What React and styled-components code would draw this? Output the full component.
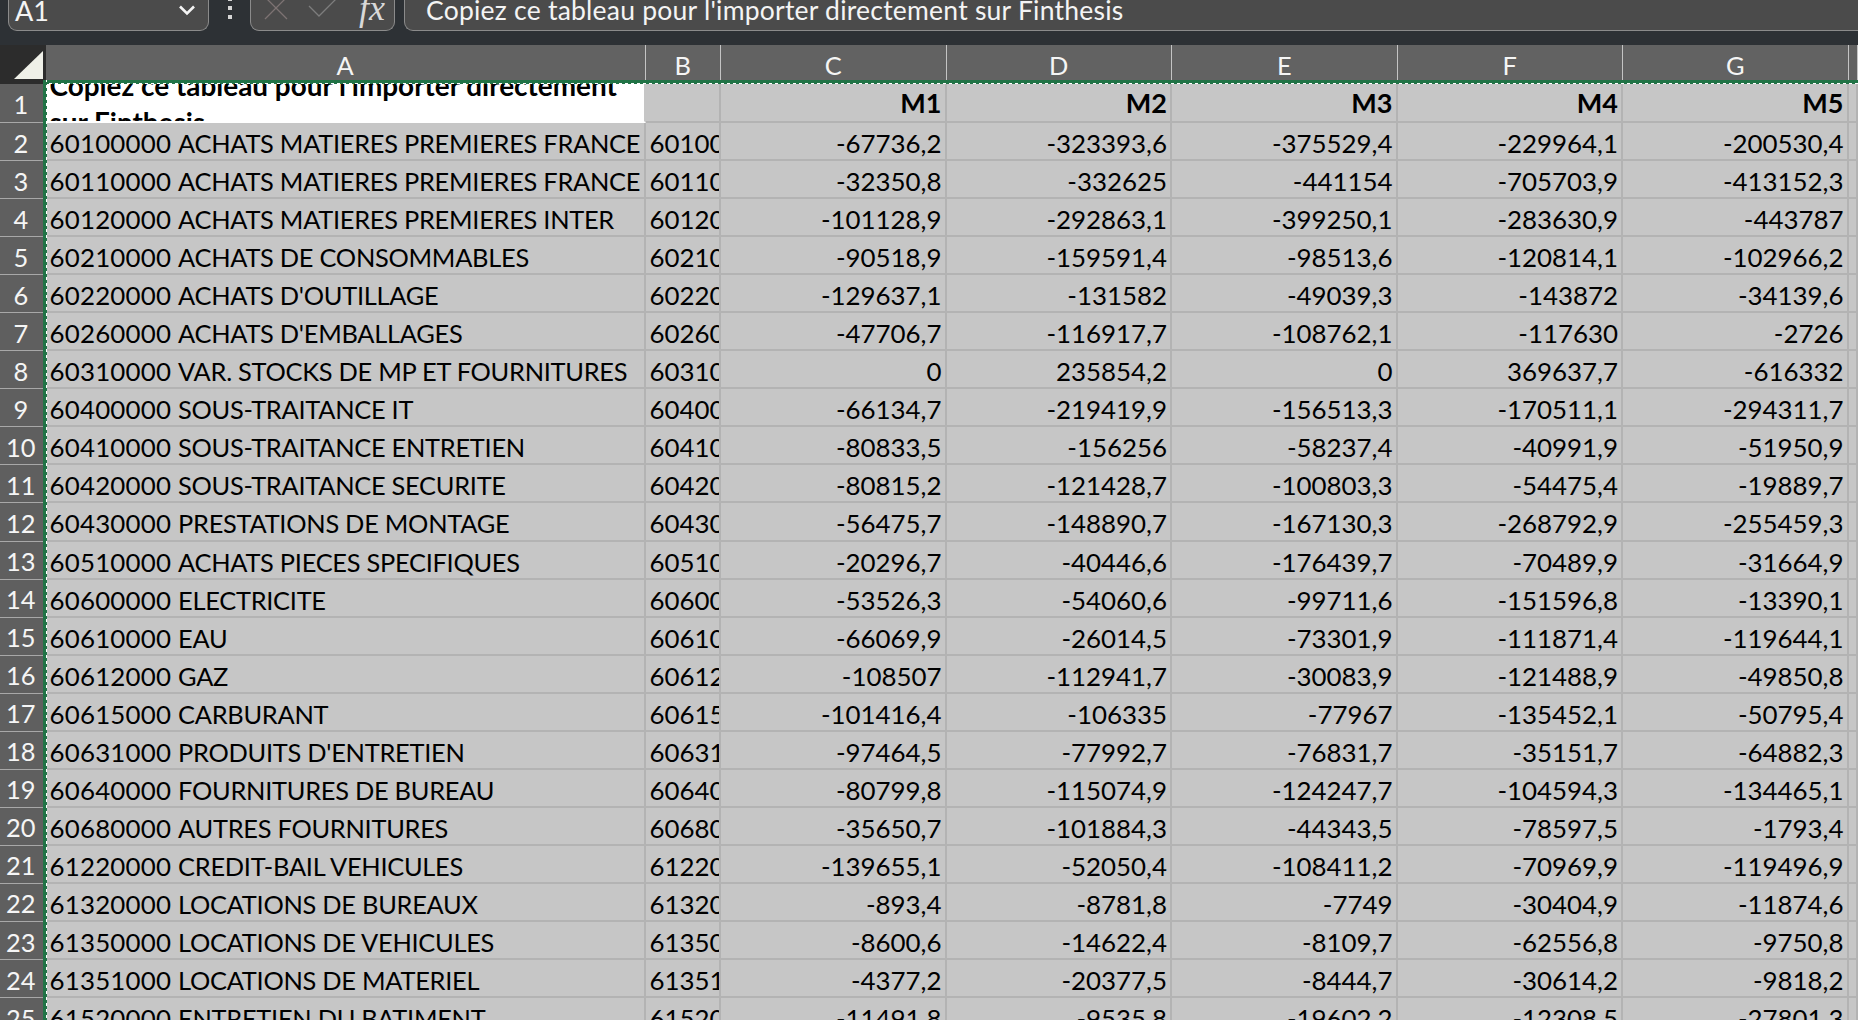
import React from "react";
import styled, { createGlobalStyle } from "styled-components";

const rows = [
    ["60100000 ACHATS MATIERES PREMIERES FRANCE", "60100", "-67736,2", "-323393,6", "-375529,4", "-229964,1", "-200530,4"],
    ["60110000 ACHATS MATIERES PREMIERES FRANCE", "60110", "-32350,8", "-332625", "-441154", "-705703,9", "-413152,3"],
    ["60120000 ACHATS MATIERES PREMIERES INTER", "60120", "-101128,9", "-292863,1", "-399250,1", "-283630,9", "-443787"],
    ["60210000 ACHATS DE CONSOMMABLES", "60210", "-90518,9", "-159591,4", "-98513,6", "-120814,1", "-102966,2"],
    ["60220000 ACHATS D'OUTILLAGE", "60220", "-129637,1", "-131582", "-49039,3", "-143872", "-34139,6"],
    ["60260000 ACHATS D'EMBALLAGES", "60260", "-47706,7", "-116917,7", "-108762,1", "-117630", "-2726"],
    ["60310000 VAR. STOCKS DE MP ET FOURNITURES", "60310", "0", "235854,2", "0", "369637,7", "-616332"],
    ["60400000 SOUS-TRAITANCE IT", "60400", "-66134,7", "-219419,9", "-156513,3", "-170511,1", "-294311,7"],
    ["60410000 SOUS-TRAITANCE ENTRETIEN", "60410", "-80833,5", "-156256", "-58237,4", "-40991,9", "-51950,9"],
    ["60420000 SOUS-TRAITANCE SECURITE", "60420", "-80815,2", "-121428,7", "-100803,3", "-54475,4", "-19889,7"],
    ["60430000 PRESTATIONS DE MONTAGE", "60430", "-56475,7", "-148890,7", "-167130,3", "-268792,9", "-255459,3"],
    ["60510000 ACHATS PIECES SPECIFIQUES", "60510", "-20296,7", "-40446,6", "-176439,7", "-70489,9", "-31664,9"],
    ["60600000 ELECTRICITE", "60600", "-53526,3", "-54060,6", "-99711,6", "-151596,8", "-13390,1"],
    ["60610000 EAU", "60610", "-66069,9", "-26014,5", "-73301,9", "-111871,4", "-119644,1"],
    ["60612000 GAZ", "60612", "-108507", "-112941,7", "-30083,9", "-121488,9", "-49850,8"],
    ["60615000 CARBURANT", "60615", "-101416,4", "-106335", "-77967", "-135452,1", "-50795,4"],
    ["60631000 PRODUITS D'ENTRETIEN", "60631", "-97464,5", "-77992,7", "-76831,7", "-35151,7", "-64882,3"],
    ["60640000 FOURNITURES DE BUREAU", "60640", "-80799,8", "-115074,9", "-124247,7", "-104594,3", "-134465,1"],
    ["60680000 AUTRES FOURNITURES", "60680", "-35650,7", "-101884,3", "-44343,5", "-78597,5", "-1793,4"],
    ["61220000 CREDIT-BAIL VEHICULES", "61220", "-139655,1", "-52050,4", "-108411,2", "-70969,9", "-119496,9"],
    ["61320000 LOCATIONS DE BUREAUX", "61320", "-893,4", "-8781,8", "-7749", "-30404,9", "-11874,6"],
    ["61350000 LOCATIONS DE VEHICULES", "61350", "-8600,6", "-14622,4", "-8109,7", "-62556,8", "-9750,8"],
    ["61351000 LOCATIONS DE MATERIEL", "61351", "-4377,2", "-20377,5", "-8444,7", "-30614,2", "-9818,2"],
    ["61520000 ENTRETIEN DU BATIMENT", "61520", "-11491,8", "-9535,8", "-19602,2", "-12308,5", "-27801,3"],
];

const GRID_COLUMNS = "45.5px 600px 75.5px 225.5px 225.5px 225.5px 225.5px 225.5px 1fr";

const GlobalStyle = createGlobalStyle`
    html, body {
        margin: 0;
        height: 100%;
        background: #2d3135;
        overflow: hidden;
    }
`;

const Page = styled.div`
    width: 1858px;
    height: 1020px;
    overflow: hidden;
    background: #2d3135;
    font-family: "Lato", "Liberation Sans", sans-serif;
    font-size: 25.4px;
    color: #000;
`;

const FormulaRow = styled.div`
    height: 31px;
    display: flex;
    padding-left: 8px;
    margin-bottom: 14px;
`;

const BarBox = styled.div`
    box-sizing: border-box;
    height: 31px;
    display: flex;
    align-items: center;
    background: #4b4b4b;
    border: 1px solid #8b8b8b;
    border-top: none;
    border-radius: 0 0 9px 9px;
    color: #f4f4f4;
    overflow: hidden;
`;

const NameBox = styled(BarBox)`
    width: 201px;
    padding: 0 12px 10px 6px;
    justify-content: space-between;
    font-size: 27px;
`;

const FxBox = styled(BarBox)`
    width: 145px;
    padding: 0 9px 0 13px;
    justify-content: space-between;
    align-items: flex-end;
`;

const FormulaBox = styled(BarBox)`
    flex: 1;
    margin-left: 9px;
    padding: 0 0 10px 21px;
    border-radius: 0 0 0 9px;
    border-right: none;
    white-space: nowrap;
    font-size: 26.5px;
    letter-spacing: 0.23px;
`;

const Dots = styled.div`
    width: 41px;
    display: flex;
    flex-direction: column;
    align-items: center;
    gap: 5px;
    margin-top: -3px;

    i {
        width: 4px;
        height: 4px;
        background: #d6d6d6;
    }
`;

const CancelSlot = styled.span`
    display: flex;
    margin-bottom: 10px;
`;

const EnterSlot = styled.span`
    display: flex;
    margin: 0 auto 12px 20px;
`;

const FxLabel = styled.span`
    font-family: "Liberation Serif", serif;
    font-style: italic;
    font-size: 36px;
    line-height: 36px;
    margin-bottom: 4px;
    color: #d8d8d8;
`;

const Sheet = styled.div`
    position: relative;
`;

const GridRow = styled.div`
    display: grid;
    grid-template-columns: ${GRID_COLUMNS};
    height: ${(p) => p.$height};
`;

const Corner = styled.div`
    background: #2c2c2c;
    display: flex;
    align-items: flex-end;
    justify-content: flex-end;
    padding: 0 3px 5px 0;
`;

const ColHead = styled.div`
    box-sizing: border-box;
    background: #626262;
    border-right: 1px solid #c4c4c4;
    color: #f5f5f5;
    display: flex;
    justify-content: center;
    align-items: center;
    padding-top: 1px;
`;

const RowHead = styled.div`
    box-sizing: border-box;
    background: #5f5f5f;
    border-bottom: 1px solid #a8a8a8;
    color: #f5f5f5;
    display: flex;
    justify-content: center;
    align-items: center;
    padding: 2px 4px 0 0;
`;

const Cell = styled.div`
    box-sizing: border-box;
    min-width: 0;
    overflow: hidden;
    white-space: nowrap;
    background: #c6c6c6;
    border-right: 2px solid #b3b3b3;
    border-bottom: 2px solid #b3b3b3;
    padding: 0 3px 0 4px;
    line-height: 41px;
    font-size: 25.9px;
    text-align: ${(p) => (p.$right ? "right" : "left")};
`;

const HeadCell = styled(Cell)`
    font-size: 27px;
    font-weight: 700;
    line-height: 38px;
`;

const TitleCell = styled(HeadCell)`
    white-space: normal;
    background: #fff;
    border-color: #c6c6c6;
    border-bottom-color: #fff;
    font-size: 27.9px;
    line-height: 37px;
    padding-right: 10px;
`;

const TitleText = styled.div`
    margin-top: -17px;
`;

const LedgerCode = styled.span`
    letter-spacing: 0.2px;
`;

const LedgerLabel = styled.span`
    font-size: 25.4px;
    letter-spacing: -0.27px;
`;

const AntsTop = styled.div`
    position: absolute;
    left: 43px;
    right: 0;
    top: 35px;
    height: 4px;
    background:
        repeating-linear-gradient(90deg, #fff 0 3px, #217346 3px 6px) bottom / 100% 1px no-repeat,
        #217346;
`;

const AntsLeft = styled.div`
    position: absolute;
    left: 43px;
    top: 35px;
    bottom: 0;
    width: 4px;
    background:
        repeating-linear-gradient(0deg, #fff 0 3px, #217346 3px 6px) right / 1px 100% no-repeat,
        #217346;
`;

const ChevronIcon = () => (
    <svg width="18" height="12" viewBox="0 0 18 12">
        <path d="M2 2.5 L9 9.5 L16 2.5" fill="none" stroke="#f4f4f4" strokeWidth="2.6" />
    </svg>
);

const CancelIcon = () => (
    <svg width="24" height="24" viewBox="0 0 24 24">
        <path d="M1 1 L23 23 M23 1 L1 23" fill="none" stroke="#7d7373" strokeWidth="1.3" />
    </svg>
);

const EnterIcon = () => (
    <svg width="30" height="20" viewBox="0 0 30 20">
        <path d="M1 8 L11 18 L29 0" fill="none" stroke="#7d7d7d" strokeWidth="1.3" />
    </svg>
);

const SelectAllIcon = () => (
    <svg width="29" height="28" viewBox="0 0 29 28">
        <path d="M29 0 V28 H0 Z" fill="#eff0e8" />
    </svg>
);

const columns = ["A", "B", "C", "D", "E", "F", "G", ""];

const App = () => {
    return (
        <Page>
            <GlobalStyle />
            <FormulaRow>
                <NameBox>
                    A1
                    <ChevronIcon />
                </NameBox>
                <Dots>
                    <i />
                    <i />
                    <i />
                </Dots>
                <FxBox>
                    <CancelSlot>
                        <CancelIcon />
                    </CancelSlot>
                    <EnterSlot>
                        <EnterIcon />
                    </EnterSlot>
                    <FxLabel>fx</FxLabel>
                </FxBox>
                <FormulaBox>Copiez ce tableau pour l'importer directement sur Finthesis</FormulaBox>
            </FormulaRow>

            <Sheet>
                <GridRow $height="39px">
                    <Corner>
                        <SelectAllIcon />
                    </Corner>
                    {columns.map((name, idx) => (
                        <ColHead key={idx}>{name}</ColHead>
                    ))}
                </GridRow>

                <GridRow $height="39px">
                    <RowHead>1</RowHead>
                    <TitleCell>
                        <TitleText>Copiez ce tableau pour l'importer directement sur Finthesis</TitleText>
                    </TitleCell>
                    <Cell />
                    {["M1", "M2", "M3", "M4", "M5"].map((m) => (
                        <HeadCell key={m} $right>
                            {m}
                        </HeadCell>
                    ))}
                    <Cell />
                </GridRow>

                {rows.map((row, idx) => (
                    <GridRow key={idx} $height="38.06px">
                        <RowHead>{idx + 2}</RowHead>
                        <Cell>
                            <LedgerCode>{row[0].slice(0, 9)}</LedgerCode>
                            <LedgerLabel>{row[0].slice(9)}</LedgerLabel>
                        </Cell>
                        {row.slice(1).map((value, col) => (
                            <Cell key={col} $right={col > 0}>
                                {value}
                            </Cell>
                        ))}
                        <Cell />
                    </GridRow>
                ))}

                <AntsTop />
                <AntsLeft />
            </Sheet>
        </Page>
    );
};

export default App;
